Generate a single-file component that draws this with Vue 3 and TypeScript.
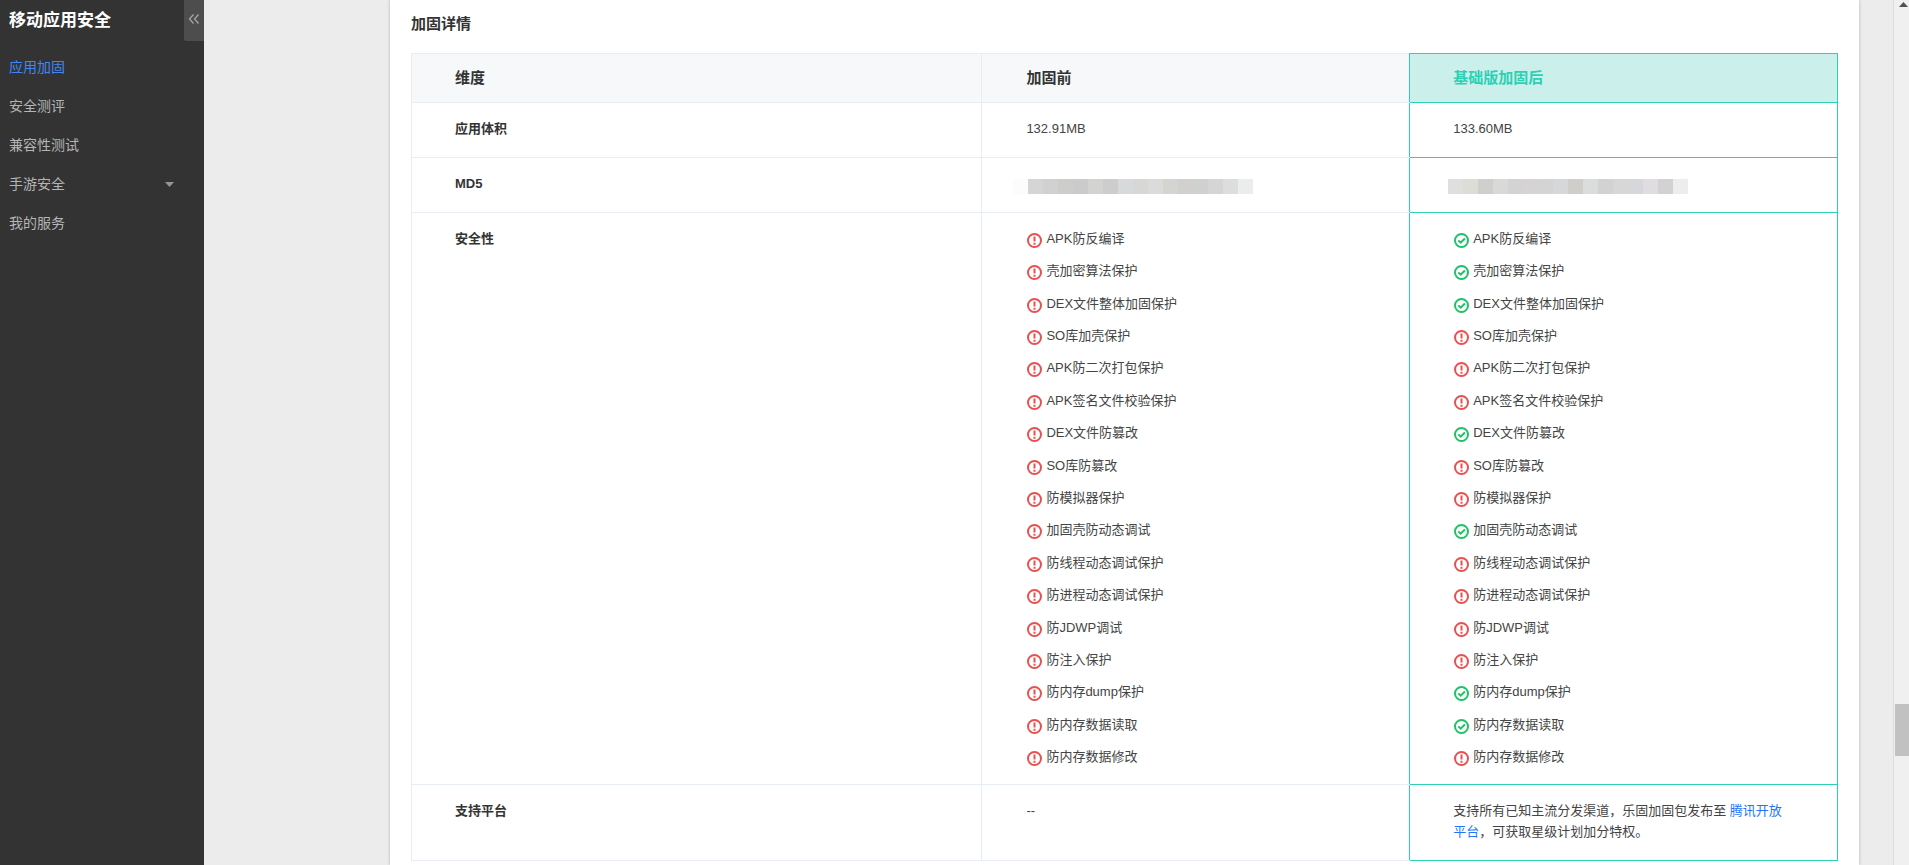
<script setup lang="ts">
interface Check {
  label: string
  passed: boolean
}

const menu = [
  { label: '应用加固', active: true, expandable: false },
  { label: '安全测评', active: false, expandable: false },
  { label: '兼容性测试', active: false, expandable: false },
  { label: '手游安全', active: false, expandable: true },
  { label: '我的服务', active: false, expandable: false },
]

const checks: Check[] = [
  { label: 'APK防反编译', passed: true },
  { label: '壳加密算法保护', passed: true },
  { label: 'DEX文件整体加固保护', passed: true },
  { label: 'SO库加壳保护', passed: false },
  { label: 'APK防二次打包保护', passed: false },
  { label: 'APK签名文件校验保护', passed: false },
  { label: 'DEX文件防篡改', passed: true },
  { label: 'SO库防篡改', passed: false },
  { label: '防模拟器保护', passed: false },
  { label: '加固壳防动态调试', passed: true },
  { label: '防线程动态调试保护', passed: false },
  { label: '防进程动态调试保护', passed: false },
  { label: '防JDWP调试', passed: false },
  { label: '防注入保护', passed: false },
  { label: '防内存dump保护', passed: true },
  { label: '防内存数据读取', passed: true },
  { label: '防内存数据修改', passed: false },
]

const columns = [
  { key: 'before', after: false },
  { key: 'after', after: true },
]

const maskBefore = ['#fcfcfc', '#d5d5d5', '#d1d1d1', '#cdcdcb', '#cbcbcb', '#d3d3d1', '#cdcdcd', '#d6dada', '#d7d7d5', '#dbdbdb', '#d4d4d1', '#d1d0ce', '#cfd1cf', '#d5d5d5', '#dddddd', '#ebecec']
const maskAfter = ['#dfdfdd', '#ddddd8', '#cfcfcd', '#d9d9d7', '#d3d3d3', '#d5d3d4', '#d5d4d5', '#d6d7d9', '#cfcec9', '#dbdddc', '#d2d2d2', '#d7d7d7', '#d6d7da', '#dfdddf', '#d2d2d4', '#ededed']
</script>

<template>
  <div class="app">
    <aside class="sidebar">
      <h1 class="brand">移动应用安全</h1>
      <button class="collapse" type="button" aria-label="收起菜单">
        <svg width="12" height="12" viewBox="0 0 12 12"><path d="M5.500 1.500 1.500 6l4 4.500M10.500 1.500 6.500 6l4 4.500" /></svg>
      </button>
      <nav>
        <a v-for="item in menu" :key="item.label" href="#" class="nav-item" :class="{ active: item.active }">
          <span>{{ item.label }}</span>
          <svg v-if="item.expandable" class="caret" width="9" height="5" viewBox="0 0 9 5"><path d="M0 0h9L4.500 5z" /></svg>
        </a>
      </nav>
    </aside>

    <main class="content">
      <section class="panel">
        <h2 class="heading">加固详情</h2>
        <table class="detail">
          <colgroup>
            <col class="col-name" />
            <col class="col-value" />
            <col class="col-value" />
          </colgroup>
          <thead>
            <tr>
              <th scope="col">维度</th>
              <th scope="col">加固前</th>
              <th scope="col" class="hl">基础版加固后</th>
            </tr>
          </thead>
          <tbody>
            <tr>
              <th scope="row">应用体积</th>
              <td>132.91MB</td>
              <td class="hl">133.60MB</td>
            </tr>
            <tr>
              <th scope="row">MD5</th>
              <td><div class="mask mask-before"><i v-for="(c, i) in maskBefore" :key="i" :style="{ background: c }"></i></div></td>
              <td class="hl"><div class="mask mask-after"><i v-for="(c, i) in maskAfter" :key="i" :style="{ background: c }"></i></div></td>
            </tr>
            <tr>
              <th scope="row">安全性</th>
              <td v-for="col in columns" :key="col.key" :class="{ hl: col.after }">
                <ul class="checks">
                  <li v-for="check in checks" :key="check.label">
                    <svg v-if="col.after && check.passed" class="icon ok" width="15" height="15" viewBox="0 0 15 15">
                      <circle cx="7.500" cy="7.500" r="6.500" />
                      <path d="m4.300 7.400 2.400 2.300 4.200-4.200" />
                    </svg>
                    <svg v-else class="icon warn" width="15" height="15" viewBox="0 0 15 15">
                      <circle cx="7.500" cy="7.500" r="6.500" />
                      <path d="M7.500 3.500v5M7.500 9.700v2" />
                    </svg>
                    <span>{{ check.label }}</span>
                  </li>
                </ul>
              </td>
            </tr>
            <tr>
              <th scope="row">支持平台</th>
              <td>--</td>
              <td class="hl">支持所有已知主流分发渠道，乐固加固包发布至 <a href="#">腾讯开放平台</a>，可获取星级计划加分特权。</td>
            </tr>
          </tbody>
        </table>
      </section>
    </main>

    <div class="scrollbar" aria-hidden="true">
      <svg class="scroll-up" width="9" height="5" viewBox="0 0 9 5"><path d="M0 5h9L4.500 0z" /></svg>
      <div class="thumb"></div>
    </div>
  </div>
</template>

<style>
body {
  margin: 0;
  overflow: hidden;
}
</style>

<style scoped>
.app {
  display: flex;
  height: 100vh;
  overflow: hidden;
  background: #ececec;
  color: #444;
  font: 13px/21px "Liberation Sans", "Noto Sans CJK SC", sans-serif;
}

.sidebar {
  position: relative;
  flex: 0 0 204px;
  box-sizing: border-box;
  background: #333;
}

.brand {
  margin: 0;
  padding: 7px 9px 10px;
  color: #fff;
  font-size: 17px;
  line-height: 28px;
}

.collapse {
  position: absolute;
  top: 0;
  right: 0;
  width: 20px;
  height: 41px;
  padding: 0;
  border: 0;
  border-radius: 0 0 0 2px;
  background: #4d4d4d;
}

.collapse path {
  fill: none;
  stroke: #a6a6a6;
  stroke-width: 1.3;
}

.nav-item {
  display: flex;
  align-items: center;
  justify-content: space-between;
  height: 39px;
  padding: 6px 30px 0 9px;
  box-sizing: border-box;
  color: #b5b5b5;
  font-size: 14px;
  text-decoration: none;
}

.nav-item.active {
  color: #4087f5;
}

.caret {
  fill: #959595;
}

.content {
  flex: 1;
  min-width: 0;
  padding: 0 34px 0 186px;
}

.panel {
  box-sizing: border-box;
  min-height: 100vh;
  padding: 12px 21px 0;
  background: #fff;
  box-shadow: 0 0 3px rgba(0, 0, 0, 0.25);
}

.heading {
  margin: 0 0 17px;
  color: #333;
  font-size: 15px;
  line-height: 24px;
}

.detail {
  width: 100%;
  table-layout: fixed;
  border-collapse: collapse;
}

.col-name {
  width: 40%;
}

.col-value {
  width: 30%;
}

.detail th,
.detail td {
  box-sizing: border-box;
  padding: 15px 43px 18px;
  border: 1px solid #e8ecf3;
  text-align: left;
  vertical-align: top;
}

.detail th {
  color: #333;
}

.detail thead th {
  padding: 13px 43px 14px;
  background: #f6f8fa;
  font-size: 15px;
}

.detail tr > :nth-child(2) {
  padding-left: 44px;
  border-right-color: #2cd1b5;
}

.detail tr > .hl {
  border-color: #2cd1b5;
}

.detail thead tr > .hl {
  background: #cbefea;
  color: #2cd1b5;
}

.detail a {
  color: #1f75ff;
  text-decoration: none;
}

.mask {
  display: flex;
  height: 15px;
  margin: 6px 0 0;
}

.mask i {
  flex: 0 0 15px;
}

.mask-before {
  margin-left: -13px;
}

.mask-after {
  margin-left: -5px;
}

.checks {
  display: grid;
  grid-auto-rows: 1fr;
  height: 551px;
  margin: -6px 0 -7px;
  padding: 0;
  list-style: none;
}

.checks li {
  display: flex;
  align-items: center;
  gap: 4px;
}

.icon {
  margin: 4px 0 0 1px;
  fill: none;
  stroke-width: 2;
}

.ok {
  stroke: #1fc267;
}

.warn {
  stroke: #e9504f;
}

.scrollbar {
  flex: 0 0 16px;
  display: flex;
  flex-direction: column;
  box-sizing: border-box;
  padding: 2px 0 0 1px;
  border-left: 1px solid #dcdcdc;
  background: #f0f0f0;
}

.scroll-up {
  margin-left: 4px;
  fill: #505050;
}

.thumb {
  height: 6vh;
  margin-top: calc(81vh - 4px);
  background: #c1c1c1;
}
</style>
